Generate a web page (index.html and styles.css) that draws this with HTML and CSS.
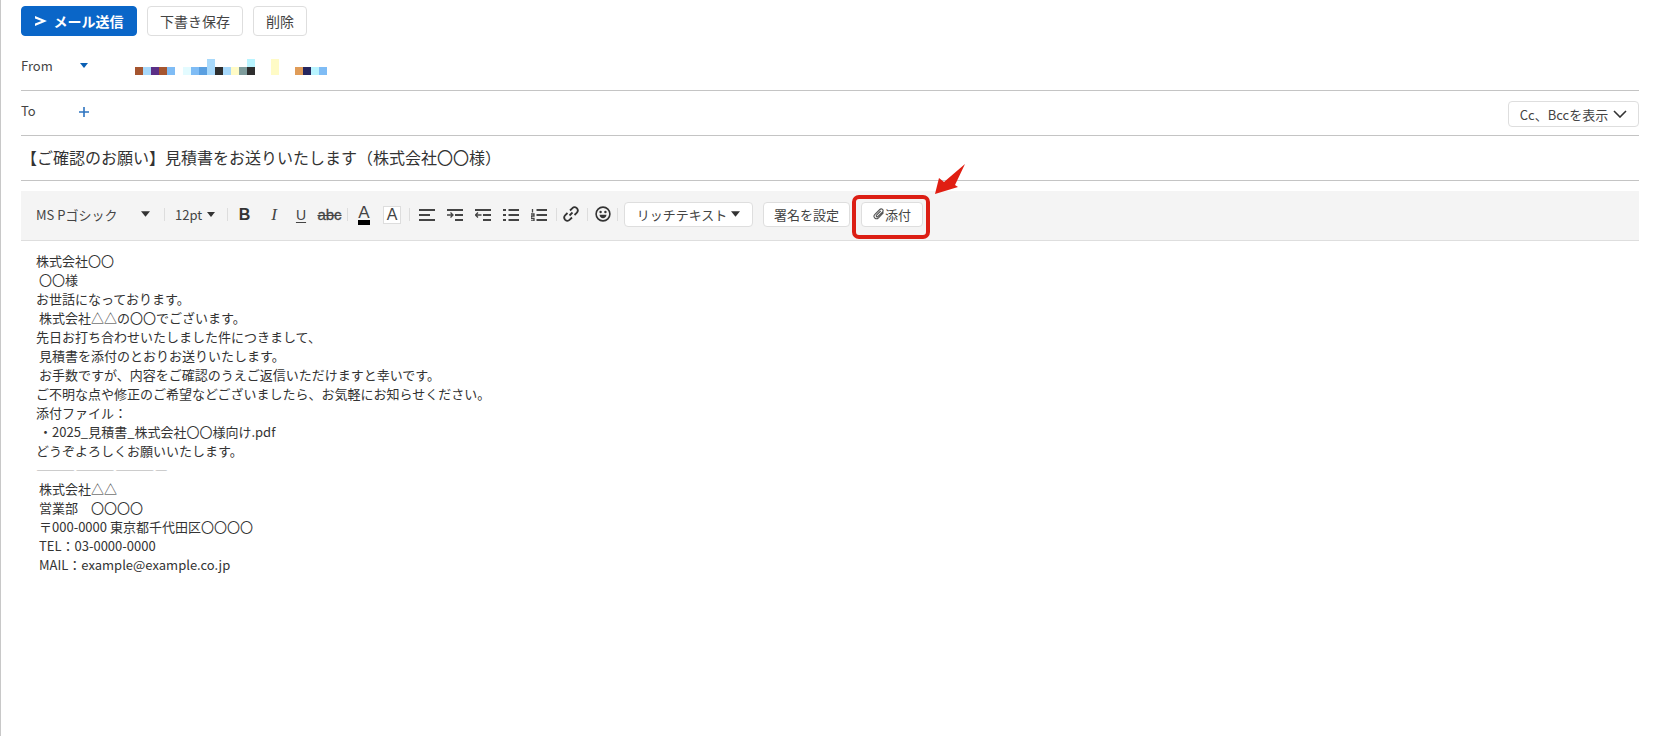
FILE: index.html
```html
<!DOCTYPE html>
<html lang="ja">
<head>
<meta charset="utf-8">
<title>メール作成</title>
<link rel="stylesheet" href="styles.css">
</head>
<body>
<div class="composer">
  <div class="actions">
    <button class="btn btn-send"><svg class="send-icon" viewBox="0 0 12 10"><path d="M0 0L12 5L0 10V7.600L6.500 5L0 2.400Z"/></svg>メール送信</button>
    <button class="btn">下書き保存</button>
    <button class="btn">削除</button>
  </div>

  <div class="field field-from">
    <span class="field-label">From</span>
    <svg class="caret-blue" viewBox="0 0 8 5"><path d="M0 0H8L4 5Z"/></svg>
    <div class="mosaic">
      <i class="b c1"></i><i class="b c2"></i><i class="b c3"></i><i class="b c1"></i><i class="b c4"></i><i class="gap"></i>
      <i class="b c5"></i><i class="b c4"></i><i class="b c6"></i><i class="b t c2"></i><i class="b c7"></i><i class="b c2"></i><i class="b c8"></i><i class="b c9"></i><i class="b t c7 capped"></i>
      <i class="gap wide"></i><i class="b t c8"></i><i class="gap wide"></i>
      <i class="b c10"></i><i class="b c11"></i><i class="b c12"></i><i class="b c4"></i>
    </div>
  </div>

  <div class="field field-to">
    <span class="field-label">To</span>
    <svg class="plus" viewBox="0 0 10 10"><path d="M5 0V10M0 5H10"/></svg>
    <button class="btn btn-cc">Cc、Bccを表示<svg class="chev" viewBox="0 0 14 8"><path d="M1 1L7 7L13 1"/></svg></button>
  </div>

  <div class="subject">【ご確認のお願い】見積書をお送りいたします（株式会社〇〇様）</div>

  <div class="toolbar">
    <span class="font-name">MS Pゴシック</span>
    <svg class="caret" viewBox="0 0 10 6"><path d="M0 0H10L5 6Z"/></svg>
    <i class="sep sep-a"></i>
    <span class="font-size">12pt</span>
    <svg class="caret caret-size" viewBox="0 0 10 6"><path d="M0 0H10L5 6Z"/></svg>
    <i class="sep sep-b"></i>
    <span class="tool tool-b">B</span>
    <span class="tool tool-i">I</span>
    <span class="tool tool-u">U</span>
    <span class="tool tool-s">abc</span>
    <i class="sep sep-c"></i>
    <span class="tool tool-color">A</span>
    <span class="tool tool-bg">A</span>
    <i class="sep sep-d"></i>
    <svg class="icon" viewBox="0 0 16 12"><path d="M0 1H16M0 6H11M0 11H16"/></svg>
    <svg class="icon" viewBox="0 0 16 12"><path d="M0 1H16M8 6H16M8 11H16"/><path class="thin" d="M0 6H6M3.500 3.500L6 6L3.500 8.500"/></svg>
    <svg class="icon" viewBox="0 0 16 12"><path d="M0 1H16M8 6H16M8 11H16"/><path class="thin" d="M0.500 6H6.500M3 3.500L0.500 6L3 8.500"/></svg>
    <svg class="icon" viewBox="0 0 16 12"><path d="M0 1H3M0 6H3M0 11H3M5.500 1H16M5.500 6H16M5.500 11H16"/></svg>
    <svg class="icon" viewBox="0 0 16 12"><path d="M5.500 1H16M5.500 6H16M5.500 11H16"/><path class="thin" d="M1.500 0V3.500M0 5H3V7H0.500V8.500M0 9.500H3V12H0"/></svg>
    <i class="sep sep-e"></i>
    <svg class="icon-link" viewBox="0 0 16 16"><path d="M6.500 9.500L9.500 6.500M7 4.500L9.200 2.300C10.500 1 12.500 1 13.800 2.200C15 3.500 15 5.500 13.700 6.800L11.500 9M9 11.500L6.800 13.700C5.500 15 3.500 15 2.200 13.800C1 12.500 1 10.500 2.300 9.200L4.500 7"/></svg>
    <i class="sep sep-f"></i>
    <svg class="icon-smile" viewBox="0 0 16 16"><circle cx="8" cy="8" r="6.900"/><circle class="fill" cx="5.600" cy="6" r="1.200"/><circle class="fill" cx="10.400" cy="6" r="1.200"/><path class="fill" d="M4.500 8.800H11.500C11.300 11 9.800 12.300 8 12.300C6.200 12.300 4.700 11 4.500 8.800Z"/></svg>
    <i class="sep sep-g"></i>
    <button class="btn btn-tool btn-rich">リッチテキスト<svg class="caret caret-rich" viewBox="0 0 10 6"><path d="M0 0H10L5 6Z"/></svg></button>
    <button class="btn btn-tool btn-sign">署名を設定</button>
    <button class="btn btn-tool btn-attach"><svg class="clip" viewBox="0 0 12 12"><path d="M10.500 4.500L5.500 9.800C4.400 10.900 2.800 10.900 1.800 10C0.800 9 0.800 7.400 1.900 6.300L6.800 1.500C7.600 0.700 8.800 0.700 9.500 1.400C10.200 2.100 10.200 3.300 9.400 4.100L4.900 8.500C4.500 8.900 3.900 8.900 3.500 8.500C3.100 8.100 3.100 7.500 3.500 7.100L7.700 3"/></svg>添付</button>
  </div>

  <div class="body-text">
    <div>株式会社〇〇</div>
    <div class="in">〇〇様</div>
    <div>お世話になっております。</div>
    <div class="in">株式会社△△の〇〇でございます。</div>
    <div>先日お打ち合わせいたしました件につきまして、</div>
    <div class="in">見積書を添付のとおりお送りいたします。</div>
    <div class="in">お手数ですが、内容をご確認のうえご返信いただけますと幸いです。</div>
    <div>ご不明な点や修正のご希望などございましたら、お気軽にお知らせください。</div>
    <div>添付ファイル：</div>
    <div class="in">・2025_見積書_株式会社〇〇様向け.pdf</div>
    <div>どうぞよろしくお願いいたします。</div>
    <div class="rule">――― ――― ――― ―</div>
    <div class="in">株式会社△△</div>
    <div class="in">営業部　〇〇〇〇</div>
    <div class="in">〒000-0000 東京都千代田区〇〇〇〇</div>
    <div class="in">TEL：03-0000-0000</div>
    <div class="in">MAIL：example@example.co.jp</div>
  </div>
</div>

<div class="highlight"></div>
<svg class="arrow" viewBox="0 0 40 40"><path d="M1 36L5 20L10 24L31 6L21 27L24 29Z"/></svg>
</body>
</html>
```

FILE: styles.css
```css
* { box-sizing: border-box; }
html, body { margin: 0; padding: 0; background: #fff; }
body {
  width: 1655px;
  height: 736px;
  overflow: hidden;
  position: relative;
  color: #333;
  font-family: "Noto Sans CJK JP", "Noto Sans", sans-serif;
  font-size: 13px;
}
.composer {
  width: 1639px;
  height: 736px;
  padding: 6px 0 0 20px;
  border-left: 1px solid #c8c8c8;
}
.actions { display: flex; gap: 10px; height: 30px; }
.btn {
  display: inline-flex;
  align-items: center;
  justify-content: center;
  height: 30px;
  padding: 0 12px;
  background: #fff;
  border: 1px solid #dedede;
  border-radius: 4px;
  color: #444;
  font: inherit;
  font-size: 14px;
  white-space: nowrap;
}
.btn-send {
  width: 116px;
  background: #0a66c8;
  border-color: #0a66c8;
  color: #fff;
  font-weight: 700;
  padding: 0;
}
.send-icon { width: 12px; height: 10px; margin-right: 7px; fill: #fff; }
.field { display: flex; align-items: center; border-bottom: 1px solid #c4c4c4; }
.field-label { width: 58px; font-size: 13px; color: #444; }
.field-from { height: 55px; padding-top: 5px; }
.field-to { height: 45px; padding-bottom: 6px; }
.caret-blue { width: 8px; height: 5px; margin-left: 1px; fill: #0a5fb4; }
.plus { width: 10px; height: 10px; margin-top: 4px; stroke: #2e74c0; stroke-width: 1.600; fill: none; }
.mosaic {
  display: flex;
  align-items: flex-end;
  height: 16px;
  margin-left: 47px;
  margin-top: 3px;
}
.mosaic i { display: block; width: 8px; }
.b { height: 8px; }
.t { height: 16px; }
.gap.wide { width: 16px; }
.c1 { background: #a5552f; }
.c2 { background: #a8d9fb; }
.c3 { background: #5b2f86; }
.c4 { background: #7fbcf5; }
.c5 { background: #e3fbff; }
.c6 { background: #5a9fe0; }
.c7 { background: #2e2e2e; }
.c8 { background: #fffbc6; }
.c9 { background: #7e9c9c; }
.c10 { background: #e09c58; }
.c11 { background: #26265e; }
.c12 { background: #b9f4ff; }
.capped { background: linear-gradient(#b9f4ff 50%, #2e2e2e 50%); }
.btn-cc {
  align-self: flex-start;
  margin: 10px 0 0 auto;
  width: 131px;
  height: 26px;
  padding: 0;
  font-size: 13px;
}
.chev { width: 14px; height: 8px; margin-left: 5px; fill: none; stroke: #333; stroke-width: 1.600; }
.subject {
  height: 45px;
  padding-bottom: 3px;
  display: flex;
  align-items: center;
  font-size: 16px;
  border-bottom: 1px solid #c4c4c4;
  color: #333;
}
.toolbar {
  display: flex;
  align-items: center;
  height: 50px;
  margin-top: 10px;
  padding: 0 0 3px 15px;
  background: #f4f4f4;
  border-bottom: 1px solid #dedede;
  color: #444;
}
.font-name { width: 105px; font-size: 13px; flex: none; margin-top: 1px; }
.caret { width: 9px; height: 6px; fill: #333; flex: none; }
.sep { display: block; width: 1px; height: 13px; background: #ddd; flex: none; }
.sep-a { margin-left: 14px; }
.font-size { margin: 1px 0 0 10px; font-size: 13px; width: 32px; flex: none; }
.caret-size { width: 8px; height: 5px; }
.sep-b { margin-left: 12px; }
.tool { display: flex; align-items: center; justify-content: center; flex: none; height: 24px; margin-top: 1px; }
.tool-b { width: 27px; margin-left: 3px; font: 700 16px "Liberation Sans", sans-serif; color: #333; }
.tool-i { width: 30px; margin-left: 1px; font: italic 400 17px "Liberation Serif", serif; }
.tool-u { width: 24px; font: 400 14px "Liberation Sans", sans-serif; text-decoration: underline; text-underline-offset: 2px; }
.tool-s { width: 33px; font: 400 15px "Liberation Sans", sans-serif; text-decoration: line-through; -webkit-text-stroke: 0.3px #444; }
.sep-c { margin-left: 1px; }
.tool-color {
  width: 12px; height: 20px; margin-left: 10px;
  font: 400 17px/15px "Liberation Sans", sans-serif;
  border-bottom: 5px solid #000;
  align-items: flex-start;
}
.tool-bg {
  width: 18px; height: 18px; margin-left: 13px;
  background: #fff;
  border: 1px solid #ddd;
  font: 400 16px "Liberation Sans", sans-serif;
}
.sep-d { margin-left: 8px; }
.icon {
  width: 16px; height: 12px; flex: none; margin: 1px 0 0 12px;
  fill: none; stroke: #444; stroke-width: 2;
}
.icon .thin { stroke-width: 1.300; }
.sep-d + .icon { margin-left: 9px; }
.sep-e { margin-left: 9px; }
.icon-link { width: 16px; height: 16px; margin-left: 6px; flex: none; fill: none; stroke: #333; stroke-width: 1.800; }
.sep-f { margin-left: 8px; }
.icon-smile { width: 16px; height: 16px; margin-left: 7px; flex: none; fill: none; stroke: #333; stroke-width: 1.600; }
.icon-smile .fill { fill: #333; stroke: none; }
.sep-g { margin-left: 6px; }
.btn-tool { height: 25px; padding: 0; font-size: 13px; flex: none; }
.btn-rich { width: 129px; margin-left: 6px; }
.caret-rich { margin-left: 4px; }
.btn-sign { width: 87px; margin-left: 10px; }
.btn-attach { width: 62px; margin-left: 11px; }
.clip { width: 12px; height: 12px; fill: none; stroke: #555; stroke-width: 1.100; }
.body-text {
  padding: 10px 0 0 15px;
  font-size: 13px;
  line-height: 19px;
  color: #333;
}
.in { padding-left: 3px; }
.rule { color: #aaa; white-space: pre; letter-spacing: -0.8px; word-spacing: -0.7px; }
.highlight {
  position: absolute;
  left: 852px;
  top: 195px;
  width: 78px;
  height: 44px;
  border: 4px solid #dc1e14;
  border-radius: 7px;
}
.arrow {
  position: absolute;
  left: 934px;
  top: 158px;
  width: 40px;
  height: 40px;
  fill: #e01e12;
}
```
